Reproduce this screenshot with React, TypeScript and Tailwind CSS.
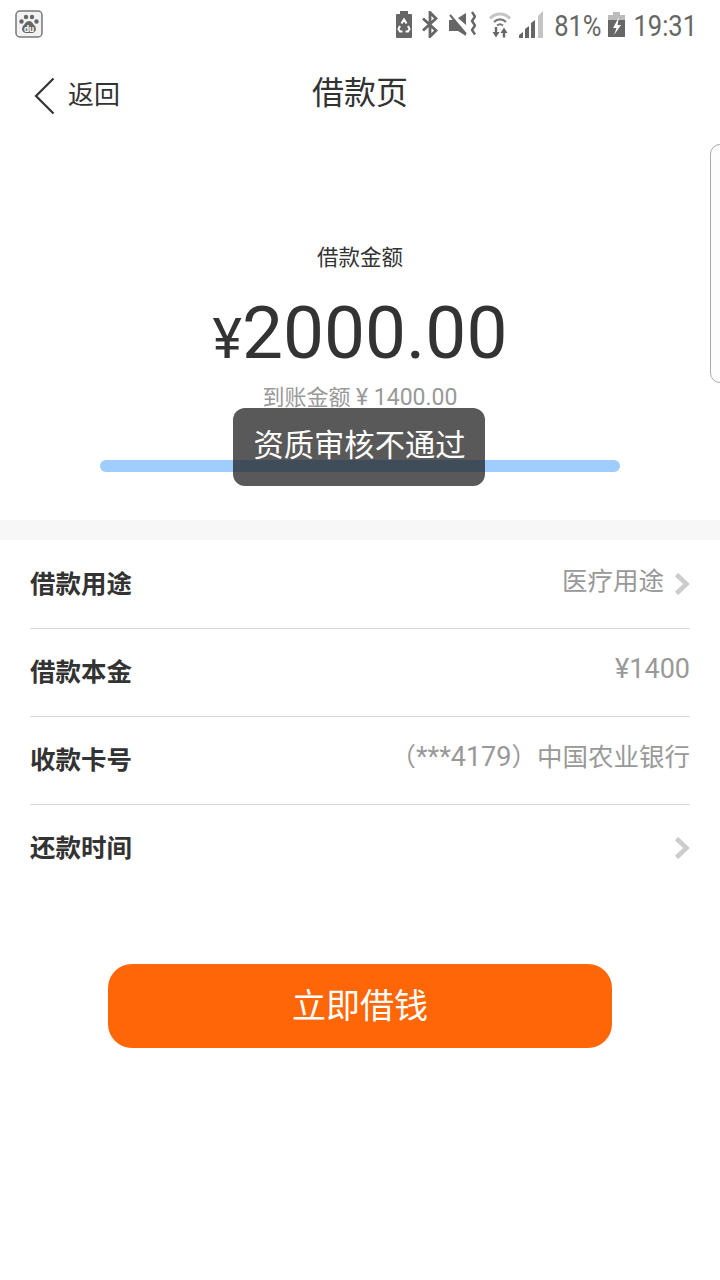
import type { ReactNode } from 'react';

const fontCn = "font-['Roboto','Noto_Sans_CJK_SC',sans-serif]";

function StatusIcons() {
  return (
    <div className="flex items-center">
      {/* recycle battery */}
      <svg width="18" height="27" viewBox="0 0 18 27" className="mr-[9px]">
        <path d="M5 0h8v3h3a1 1 0 0 1 1 1v22a1 1 0 0 1-1 1H2a1 1 0 0 1-1-1V4a1 1 0 0 1 1-1h3z" fill="#666" />
        <path d="M6.500 12.500L9 8.500l2.500 4M13 15l1.500 3-1.500 2.500h-2.500M7.500 20.500H5L3.500 18 5 15" fill="none" stroke="#fff" strokeWidth="2" />
      </svg>
      {/* bluetooth */}
      <svg width="16" height="27" viewBox="0 0 16 27" className="mr-[11px]">
        <path d="M1 7.500l13 12-6 6V1.500l6 6-13 12" fill="none" stroke="#666" strokeWidth="2.800" />
      </svg>
      {/* mute */}
      <svg width="27" height="27" viewBox="0 0 27 27" className="mr-[13px]">
        <path d="M0 9h5l3 3 9 9v4l-8-5H0zM9 7l8-5v12z" fill="#666" />
        <path d="M1 2l18 22" stroke="#fff" strokeWidth="2.500" />
        <path d="M1 4l16 19" stroke="#666" strokeWidth="2" />
        <path d="M23 1l3 4.500-3 4.500 3 4.500-3 4.500 3 4.500" fill="none" stroke="#666" strokeWidth="2.400" />
      </svg>
      {/* wifi */}
      <svg width="22" height="27" viewBox="0 0 22 27" className="mr-[8px]">
        <path d="M1 7.500c5.500-6 14.500-6 20 0" fill="none" stroke="#c4c4c4" strokeWidth="3" />
        <path d="M5 11c3.500-3.500 8.500-3.500 12 0" fill="none" stroke="#777" strokeWidth="2.200" />
        <path d="M8 14.500c1.800-1.500 4.200-1.500 6 0" fill="none" stroke="#777" strokeWidth="2" />
        <path d="M7 16v6" stroke="#666" strokeWidth="2.400" />
        <path d="M3.500 21h7L7 26.500zM11.500 22l3.500-5.500 3.500 5.500z" fill="#666" />
        <path d="M15 21v5.500" stroke="#666" strokeWidth="2.400" />
      </svg>
      {/* signal */}
      <svg width="24" height="28" viewBox="0 0 24 28" className="mr-[11px]">
        <path d="M0 28v-3l4-3v6zM6 28v-9l4-3v12zM12 28V13l4-3v18z" fill="#666" />
        <path d="M19 28V6l5-5v27z" fill="#c4c4c4" />
      </svg>
      <span className="mt-[4px] inline-block origin-center scale-y-[1.14] text-[25.500px] leading-[30px] text-[#666]">81%</span>
      {/* charging battery */}
      <svg width="17" height="25" viewBox="0 0 17 25" className="ml-[7px] mr-[8px]">
        <path d="M5 0h7v3h5v5H0V3h5z" fill="#bbb" />
        <path d="M0 8h17v17H0z" fill="#666" />
        <path d="M11 5l-6 11h3.500L6 23l7-10H9.500z" fill="#fff" />
      </svg>
      <span className="mt-[4px] inline-block origin-center scale-y-[1.14] text-[25.500px] leading-[30px] text-[#666]">19:31</span>
    </div>
  );
}

function Row({ label, value, arrow, last }: { label: string; value?: ReactNode; arrow?: boolean; last?: boolean }) {
  return (
    <div className={`flex h-[88px] items-center justify-between border-b ${last ? 'border-transparent' : 'border-[#d9d9d9]'}`}>
      <span className="text-[25.500px] font-bold text-[#333]">{label}</span>
      <div className="-mt-[8px] flex items-center">
        {value && <span className="text-[25.500px] leading-[36px] text-[#999]">{value}</span>}
        {arrow && (
          <svg width="16" height="24" viewBox="0 0 16 24" className="ml-[10px] mt-[6px]">
            <path d="M2.500 2.500L12.500 12l-10 9.500" fill="none" stroke="#ccc" strokeWidth="4.500" />
          </svg>
        )}
      </div>
    </div>
  );
}

export default function App() {
  return (
    <div className={`relative h-[1280px] w-[720px] overflow-hidden bg-white ${fontCn}`}>
      {/* status bar */}
      <div className="flex h-[48px] items-center justify-between pl-[15px] pr-[23px]">
        <svg width="29" height="29" viewBox="0 0 29 29">
          <rect x="1" y="1" width="26" height="26" rx="4" fill="#f2f2f2" stroke="#777" strokeWidth="1.500" />
          <circle cx="6.500" cy="11.500" r="2.200" fill="#666" />
          <circle cx="11" cy="7" r="2.200" fill="#666" />
          <circle cx="17" cy="7" r="2.200" fill="#666" />
          <circle cx="21.500" cy="11.500" r="2.200" fill="#666" />
          <path d="M14 11c3 0 4 3 6 5 2 3 .5 7-3 7h-6c-3.500 0-5-4-3-7 2-2 3-5 6-5z" fill="#666" />
          <text x="14" y="21.500" textAnchor="middle" fontSize="9" fontWeight="700" fill="#fff" fontFamily="Roboto, sans-serif">du</text>
        </svg>
        <StatusIcons />
      </div>

      {/* nav */}
      <div className="relative flex h-[88px] items-center justify-center">
        <div className="absolute left-[34px] top-[28px] flex items-center">
          <svg width="22" height="38" viewBox="0 0 22 38">
            <path d="M19.500 1.500L2 19l17.500 17.500" fill="none" stroke="#333" strokeWidth="2.200" />
          </svg>
          <span className="ml-[12px] text-[26px] text-[#333]">返回</span>
        </div>
        <span className="mt-[1px] text-[32px] text-[#333]">借款页</span>
      </div>

      {/* amount */}
      <div className="flex h-[384px] flex-col items-center">
        <div className="mt-[107px] text-[21.500px] leading-[30px] text-[#333]">借款金额</div>
        <div className="mt-[18px] flex items-baseline text-[#333]">
          <span className="text-[56px] leading-[84px]">¥</span>
          <span className="text-[73px] leading-[84px]">2000.00</span>
        </div>
        <div className="mt-[2px] text-[22px] leading-[30px] text-[#999]">
          到账金额 <span className="text-[23px]">¥ 1400.00</span>
        </div>
        <div className="mt-[47px] h-[12px] w-[520px] rounded-full bg-[#9fcdfd]" />
      </div>

      <div className="h-[20px] bg-[#f7f7f7]" />

      {/* rows */}
      <div className="px-[30px] pt-[1px]">
        <Row label="借款用途" value="医疗用途" arrow />
        <Row label="借款本金" value={<span className="text-[27px]">¥1400</span>} />
        <Row label="收款卡号" value={<>（<span className="text-[27px]">***4179</span>）中国农业银行</>} />
        <Row label="还款时间" arrow last />
      </div>

      <div className="mt-[71px] flex justify-center">
        <button className="h-[84px] w-[504px] rounded-[24px] bg-[#ff6608] text-[34px] text-white">立即借钱</button>
      </div>

      {/* toast */}
      <div className="absolute left-[233px] top-[408px] flex h-[78px] w-[252px] items-center justify-center rounded-[12px] bg-[#1b1b1b]/[0.73] pb-[3px] pl-[1px] text-[30.300px] text-white">
        资质审核不通过
      </div>

      {/* floating side handle */}
      <div className="absolute -right-[12px] top-[144px] h-[239px] w-[22px] rounded-[10px] border border-[#aaa] bg-[#fdfdfd]" />
    </div>
  );
}
